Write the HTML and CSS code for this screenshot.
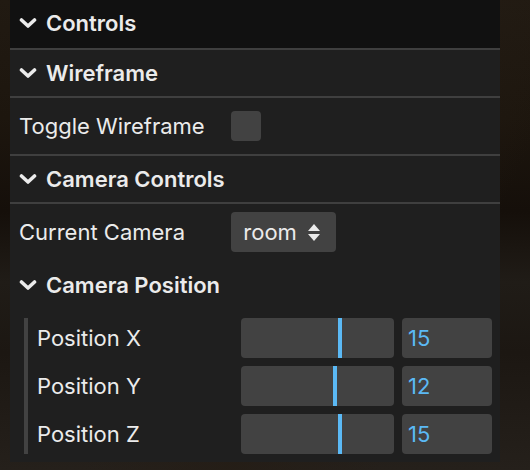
FILE: index.html
```html
<!DOCTYPE html>
<html>
<head>
<meta charset="utf-8">
<link rel="stylesheet" href="styles.css">
</head>
<body>
<div class="scene">
  <div class="gui">
    <div class="title root-title">
      <svg class="chev" viewBox="0 0 18 10" width="18" height="10"><polyline points="2.5,2 9,8 15.5,2" fill="none" stroke="#ebebeb" stroke-width="3.6" stroke-linecap="round" stroke-linejoin="round"/></svg>Controls
    </div>
    <div class="root-children">
      <div class="folder">
        <div class="title ftitle">
          <svg class="chev" viewBox="0 0 18 10" width="18" height="10"><polyline points="2.5,2 9,8 15.5,2" fill="none" stroke="#ebebeb" stroke-width="3.6" stroke-linecap="round" stroke-linejoin="round"/></svg>Wireframe
        </div>
        <div class="children">
          <div class="controller">
            <div class="name">Toggle Wireframe</div>
            <div class="widget"><span class="checkbox"></span></div>
          </div>
        </div>
      </div>
      <div class="folder">
        <div class="title ftitle">
          <svg class="chev" viewBox="0 0 18 10" width="18" height="10"><polyline points="2.5,2 9,8 15.5,2" fill="none" stroke="#ebebeb" stroke-width="3.6" stroke-linecap="round" stroke-linejoin="round"/></svg>Camera Controls
        </div>
        <div class="children">
          <div class="controller">
            <div class="name">Current Camera</div>
            <div class="widget">
              <div class="select"><span>room</span>
                <svg viewBox="0 0 12 17" width="12" height="17"><polygon points="6,0 12,7 0,7" fill="#ebebeb"/><polygon points="0,10 12,10 6,17" fill="#ebebeb"/></svg>
              </div>
            </div>
          </div>
          <div class="folder nested">
            <div class="title">
              <svg class="chev" viewBox="0 0 18 10" width="18" height="10"><polyline points="2.5,2 9,8 15.5,2" fill="none" stroke="#ebebeb" stroke-width="3.6" stroke-linecap="round" stroke-linejoin="round"/></svg>Camera Position
            </div>
            <div class="children indent">
              <div class="controller">
                <div class="name">Position X</div>
                <div class="widget">
                  <div class="slider"><div class="fill" style="width:65%"></div></div>
                  <div class="num">15</div>
                </div>
              </div>
              <div class="controller">
                <div class="name">Position Y</div>
                <div class="widget">
                  <div class="slider"><div class="fill" style="width:62%"></div></div>
                  <div class="num">12</div>
                </div>
              </div>
              <div class="controller">
                <div class="name">Position Z</div>
                <div class="widget">
                  <div class="slider"><div class="fill" style="width:65%"></div></div>
                  <div class="num">15</div>
                </div>
              </div>
            </div>
          </div>
        </div>
      </div>
    </div>
  </div>
</div>
</body>
</html>
```
FILE: styles.css
```css
* { box-sizing: border-box; margin: 0; padding: 0; }
html, body { width: 530px; height: 470px; overflow: hidden; }
body {
  background:
    linear-gradient(115deg, rgba(40,30,20,0) 40%, rgba(36,28,20,0.6) 60%, rgba(0,0,0,0) 80%),
    linear-gradient(180deg, #211a12 0%, #1d160e 25%, #150f0a 45%, #201c17 60%, #1c1712 75%, #25201b 100%);
  font-family: Inter, "Noto Sans", "Liberation Sans", sans-serif;
  color: #ebebeb;
}
.scene { padding-left: 10px; }
.gui {
  width: 490px;
  background: #1f1f1f;
  font-size: 22px;
}
.title {
  display: flex;
  align-items: center;
  height: 50px;
  padding: 0 8px;
  font-weight: 600;
  line-height: 46px;
  color: #ebebeb;
}
.chev { margin-left: 1px; margin-right: 9px; flex-shrink: 0; }
.root-title {
  height: 48px;
  padding-bottom: 3px;
  background: #111111;
}
.ftitle {
  border-top: 2px solid #3f3f3f;
  border-bottom: 2px solid #3f3f3f;
}
.folder { display: flex; flex-direction: column; }
.children {
  display: flex;
  flex-direction: column;
  gap: 8px;
  padding: 8px 0;
}
.nested { gap: 8px; }
.indent {
  padding: 0;
  margin-left: 14px;
  border-left: 4px solid #424242;
}
.controller {
  display: flex;
  align-items: center;
  height: 40px;
  padding: 0 8px;
}
.name {
  width: 45%;
  flex-shrink: 0;
  white-space: pre;
  line-height: 40px;
  padding-left: 1px;
}
.widget {
  flex: 1;
  display: flex;
  align-items: center;
  height: 40px;
}
.checkbox {
  width: 30px;
  height: 30px;
  background: #424242;
  border-radius: 4px;
}
.select {
  width: 105px;
  height: 40px;
  background: #424242;
  border-radius: 4px;
  display: flex;
  align-items: center;
  justify-content: space-between;
  padding: 0 16px 0 12px;
  line-height: 40px;
}
.slider {
  flex: 1;
  height: 40px;
  background: #424242;
  border-radius: 4px;
  padding-right: 4px;
  overflow: hidden;
  margin-right: 8px;
}
.fill {
  height: 100%;
  border-right: 4px solid #5bb9f5;
  box-sizing: content-box;
}
.num {
  width: 90px;
  flex-shrink: 0;
  height: 40px;
  background: #424242;
  border-radius: 4px;
  padding-left: 6px;
  line-height: 40px;
  color: #5bb9f5;
}
```
